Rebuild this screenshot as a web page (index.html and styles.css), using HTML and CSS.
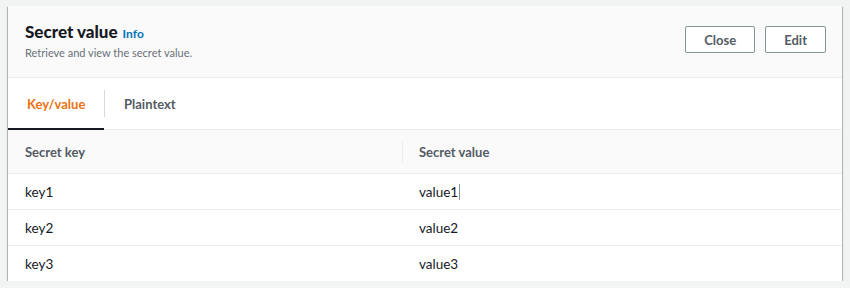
FILE: index.html
```html
<!DOCTYPE html>
<html lang="en">

<head>
    <meta charset="UTF-8">
    <meta name="viewport" content="width=device-width, initial-scale=1.0">
    <title>Secret value</title>
    <link rel="stylesheet" href="styles.css">
</head>

<body>
    <div class="panel">
        <!-- Header -->
        <div class="panel-header">
            <div class="heading">
                <h2>Secret value <a href="#" class="info">Info</a></h2>
                <p class="desc">Retrieve and view the secret value.</p>
            </div>
            <div class="actions">
                <button>Close</button>
                <button>Edit</button>
            </div>
        </div>

        <!-- Tabs -->
        <div class="tabs">
            <div class="tab active">Key/value</div>
            <div class="tab-sep"></div>
            <div class="tab">Plaintext</div>
        </div>

        <!-- Key/value table -->
        <div class="table">
            <div class="row head">
                <div class="cell">Secret key</div>
                <div class="cell sep">Secret value</div>
            </div>
            <div class="row">
                <div class="cell">key1</div>
                <div class="cell">value1<span class="caret"></span></div>
            </div>
            <div class="row">
                <div class="cell">key2</div>
                <div class="cell">value2</div>
            </div>
            <div class="row">
                <div class="cell">key3</div>
                <div class="cell">value3</div>
            </div>
        </div>
    </div>
</body>

</html>
```

FILE: styles.css
```css
body {
    font-family: Lato, 'Liberation Sans', Arial, sans-serif;
    background-color: #f2f3f3;
    color: #16191f;
    margin: 0;
    padding: 6px 8px 0 8px;
}

.panel {
    background-color: #ffffff;
    box-shadow: 0 1px 1px 0 rgba(0, 28, 36, 0.5), 1px 1px 1px 0 rgba(0, 28, 36, 0.2), -1px 1px 1px 0 rgba(0, 28, 36, 0.2);
}

.panel-header {
    display: flex;
    justify-content: space-between;
    align-items: flex-start;
    background-color: #fafafa;
    border-bottom: 1px solid #eaeded;
    height: 72px;
    box-sizing: border-box;
    padding: 16px 16px 0 17px;
}

h2 {
    margin: 0;
    font-size: 17px;
    font-weight: 900;
    line-height: 20px;
}

.info {
    color: #0073bb;
    font-size: 12px;
    font-weight: bold;
    text-decoration: none;
    margin-left: 1px;
}

.desc {
    margin: 2px 0 0;
    font-size: 11px;
    color: #687078;
}

.actions {
    display: flex;
    gap: 10px;
    margin-top: 4px;
}

button {
    font-family: inherit;
    font-size: 13px;
    font-weight: bold;
    color: #545b64;
    background-color: #ffffff;
    border: 1px solid #879596;
    border-radius: 2px;
    height: 27px;
    padding: 0 18px;
}

.tabs {
    display: flex;
    align-items: center;
    height: 52px;
    border-bottom: 1px solid #eaeded;
    box-sizing: border-box;
}

.tab {
    height: 100%;
    display: flex;
    align-items: center;
    padding: 0 19px;
    font-size: 13px;
    font-weight: bold;
    color: #545b64;
    box-sizing: border-box;
}

.tab.active {
    color: #ec7211;
    border-bottom: 2px solid #16191f;
    padding-top: 2px;
    width: 96px;
    margin-bottom: -1px;
}

.tab-sep {
    width: 1px;
    height: 27px;
    background-color: #d5dbdb;
}

.row {
    display: grid;
    grid-template-columns: 394px 1fr;
    height: 36px;
    box-sizing: border-box;
    border-bottom: 1px solid #eaeded;
    font-size: 13.5px;
}

.row:last-child {
    border-bottom: none;
    height: 35px;
}

.row.head {
    height: 44px;
    background-color: #fafafa;
    font-size: 13px;
    font-weight: bold;
    color: #545b64;
}

.cell {
    display: flex;
    align-items: center;
    padding: 0 17px;
}

.head .cell.sep {
    position: relative;
}

.head .cell.sep::before {
    content: '';
    position: absolute;
    left: 0;
    top: 12px;
    bottom: 11px;
    width: 1px;
    background-color: #eaeded;
}

.caret {
    display: inline-block;
    width: 1px;
    height: 16px;
    margin-left: 1px;
    background-color: #879596;
}
```
